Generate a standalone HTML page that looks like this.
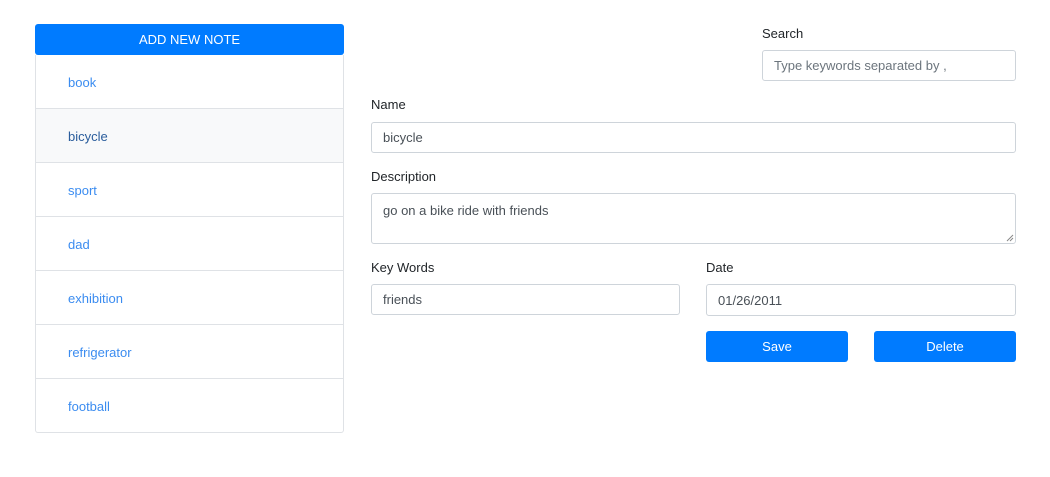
<!DOCTYPE html>
<html><head><style>
body{margin:0;width:1050px;height:477px;background:#fff;font-family:"Liberation Sans",sans-serif;font-size:13px;color:#212529;position:relative;overflow:hidden}
.a{position:absolute;box-sizing:border-box}
.btn{background:#007bff;color:#fff;border-radius:3px;text-align:center}
.inp{border:1px solid #ced4da;border-radius:3px;padding-left:11px;display:flex;align-items:center;color:#495057}
.li{left:35px;width:309px;height:54px;border:1px solid #dfe2e6;border-top:none;padding-left:32px;padding-top:1px;display:flex;align-items:center;color:#3b8cf0}
.lbl{color:#212529}
</style></head><body>
<div class="a btn" style="left:35px;top:24px;width:309px;height:31px;line-height:31px;font-size:13px">ADD NEW NOTE</div>
<div class="a li" style="top:55px">book</div>
<div class="a li" style="top:109px;background:#f8f9fa;color:#2a5d9c">bicycle</div>
<div class="a li" style="top:163px">sport</div>
<div class="a li" style="top:217px">dad</div>
<div class="a li" style="top:271px">exhibition</div>
<div class="a li" style="top:325px">refrigerator</div>
<div class="a li" style="top:379px;border-radius:0 0 3px 3px">football</div>

<div class="a lbl" style="left:762px;top:26px">Search</div>
<div class="a inp" style="left:762px;top:50px;width:254px;height:31px;color:#6c757d">Type keywords separated by ,</div>
<div class="a lbl" style="left:371px;top:97px">Name</div>
<div class="a inp" style="left:371px;top:122px;width:645px;height:31px">bicycle</div>
<div class="a lbl" style="left:371px;top:169px">Description</div>
<div class="a inp" style="left:371px;top:193px;width:645px;height:51px;align-items:flex-start;padding-top:9px">go on a bike ride with friends</div>
<svg class="a" style="left:1006px;top:234px" width="8" height="8"><path d="M1 7L7 1M4 7L7 4" stroke="#888" stroke-width="1"/></svg>
<div class="a lbl" style="left:371px;top:260px">Key Words</div>
<div class="a inp" style="left:371px;top:284px;width:309px;height:31px">friends</div>
<div class="a lbl" style="left:706px;top:260px">Date</div>
<div class="a inp" style="left:706px;top:284px;width:310px;height:32px">01/26/2011</div>
<div class="a btn" style="left:706px;top:331px;width:142px;height:31px;line-height:31px">Save</div>
<div class="a btn" style="left:874px;top:331px;width:142px;height:31px;line-height:31px">Delete</div>
</body></html>
